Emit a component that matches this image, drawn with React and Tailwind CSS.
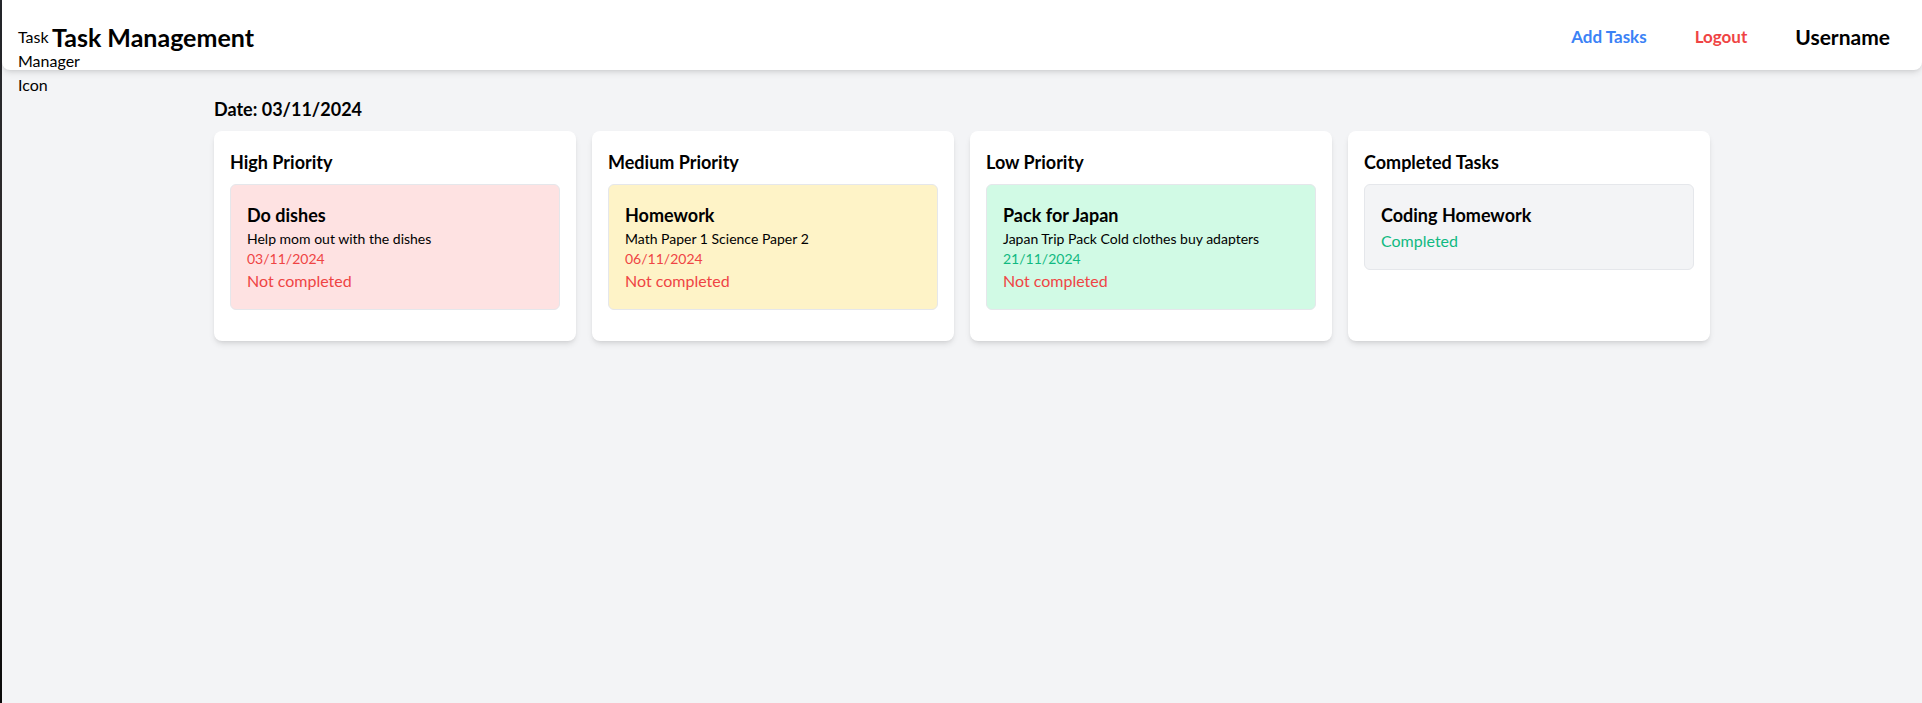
import React from "react";

const columns = [
  {
    title: "High Priority",
    tasks: [
      {
        name: "Do dishes",
        desc: "Help mom out with the dishes",
        date: "03/11/2024",
        bg: "bg-[#fee2e2]",
        dateColor: "text-[#ef4444]",
      },
    ],
  },
  {
    title: "Medium Priority",
    tasks: [
      {
        name: "Homework",
        desc: "Math Paper 1 Science Paper 2",
        date: "06/11/2024",
        bg: "bg-[#fef3c7]",
        dateColor: "text-[#ef4444]",
      },
    ],
  },
  {
    title: "Low Priority",
    tasks: [
      {
        name: "Pack for Japan",
        desc: "Japan Trip Pack Cold clothes buy adapters",
        date: "21/11/2024",
        bg: "bg-[#d1fae5]",
        dateColor: "text-[#10b981]",
      },
    ],
  },
];

function TaskCard({ task }) {
  return (
    <div className={`${task.bg} border border-[#e5e7eb] rounded-md p-4 mb-4`}>
      <h3 className="text-lg leading-7 font-bold text-black">{task.name}</h3>
      <p className="text-sm leading-5 text-black">{task.desc}</p>
      <p className={`text-sm leading-5 ${task.dateColor}`}>{task.date}</p>
      <p className="text-base leading-6 text-[#ef4444]">Not completed</p>
    </div>
  );
}

export default function App() {
  return (
    <div className="flex min-h-[703px] bg-[#f3f4f6] font-['Lato',sans-serif] text-black">
      <div className="w-[2px] shrink-0 bg-gradient-to-b from-[#25272c] via-[#2f2a28] to-[#0a0a0a]" />
      <div className="flex-1 flex flex-col">
        <header className="relative z-10 h-[70px] bg-white rounded-b-lg shadow-md flex items-center justify-between px-4">
          <div className="flex items-center">
            <div className="w-[34px] h-5 text-base leading-6 whitespace-normal">Task Manager Icon</div>
            <h1 className="mt-[3px] text-[25px] leading-7 font-bold">Task Management</h1>
          </div>
          <nav className="mt-[3px] flex items-center gap-4">
            <a className="px-4 text-[17px] font-bold text-[#3b82f6]">Add Tasks</a>
            <a className="px-4 text-[17px] font-bold text-[#ef4444]">Logout</a>
            <span className="px-4 text-[21px] font-bold">Username</span>
          </nav>
        </header>
        <main className="w-full max-w-[1536px] mx-auto p-5">
          <h2 className="mt-[5px] mb-2 text-lg leading-7 font-bold">Date: 03/11/2024</h2>
          <div className="grid grid-cols-4 gap-4">
            {columns.map((col) => (
              <section key={col.title} className="bg-white rounded-lg shadow-md px-4 pt-[17px] pb-[15px]">
                <h2 className="text-lg leading-7 font-bold mb-2">{col.title}</h2>
                {col.tasks.map((t) => (
                  <TaskCard key={t.name} task={t} />
                ))}
              </section>
            ))}
            <section className="bg-white rounded-lg shadow-md px-4 pt-[17px] pb-[15px]">
              <h2 className="text-lg leading-7 font-bold mb-2">Completed Tasks</h2>
              <div className="bg-[#f3f4f6] border border-[#e5e7eb] rounded-md p-4 mb-4">
                <h3 className="text-lg leading-7 font-bold">Coding Homework</h3>
                <p className="text-base leading-6 text-[#10b981]">Completed</p>
              </div>
            </section>
          </div>
        </main>
      </div>
    </div>
  );
}
